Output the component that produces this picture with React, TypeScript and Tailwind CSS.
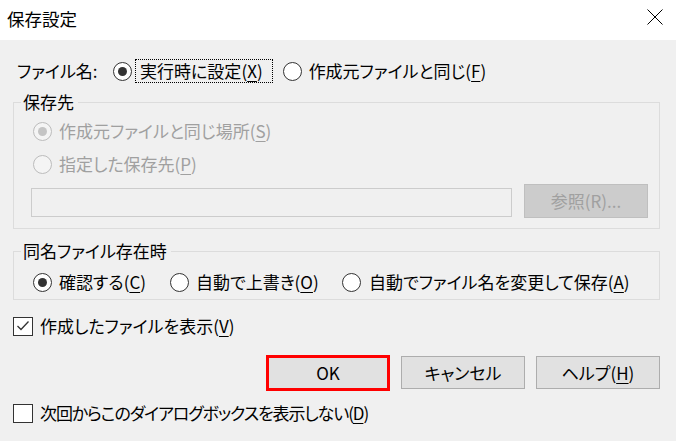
import React from 'react';

const font = "font-['Noto_Sans_CJK_JP','Noto_Sans',sans-serif] [font-feature-settings:'palt']";

function Key({ k }: { k: string }) {
  return (
    <>
      (<span className="underline underline-offset-[3px] decoration-1">{k}</span>)
    </>
  );
}

function Radio({ checked, disabled }: { checked?: boolean; disabled?: boolean }) {
  return (
    <span
      className={`flex h-[19px] w-[19px] shrink-0 items-center justify-center rounded-full border-[1.5px] ${
        disabled ? 'border-[#bcbcbc] bg-[#f4f4f4]' : 'border-[#333] bg-white'
      }`}
    >
      {checked && (
        <span className={`h-[9px] w-[9px] rounded-full ${disabled ? 'bg-[#c4c4c4]' : 'bg-[#333]'}`} />
      )}
    </span>
  );
}

function Checkbox({ checked }: { checked?: boolean }) {
  return (
    <span className="flex h-[19px] w-[20px] shrink-0 items-center justify-center border border-[#333] bg-white">
      {checked && (
        <svg width="14" height="12" viewBox="0 0 14 12">
          <polyline points="1.5,6 5,9.5 12.5,1.5" fill="none" stroke="#333" strokeWidth="1.3" />
        </svg>
      )}
    </span>
  );
}

function Button({ children, primary }: { children: React.ReactNode; primary?: boolean }) {
  return (
    <button
      className={`flex w-[124px] items-center justify-center bg-[#e1e1e1] text-black ${
        primary ? 'h-[36px] border-[3px] border-[#ff0000]' : 'h-[33px] border border-[#adadad]'
      }`}
    >
      {children}
    </button>
  );
}

export default function App() {
  return (
    <div className={`h-[441px] w-[676px] overflow-hidden bg-[#f0f0f0] text-[17px] leading-[22px] text-black ${font}`}>
      {/* title bar */}
      <div className="flex h-[40px] items-center justify-between bg-white pl-[7px] pr-[13px]">
        <span className="-mt-[3px] text-[17.5px]">保存設定</span>
        <svg width="16" height="16" viewBox="0 0 16 16" className="-mt-[6px]">
          <path d="M0.5 0.5 L15.5 15.5 M15.5 0.5 L0.5 15.5" stroke="#000" strokeWidth="1" />
        </svg>
      </div>

      <div className="px-[13px]">
        {/* file name row */}
        <div className="mt-[20px] flex h-[22px] items-center">
          <span className="ml-[4px] w-[96px]">ファイル名:</span>
          <Radio checked />
          <span className="ml-[3px] border border-dotted border-black pl-[4px] pr-[9px]">
            実行時に設定<Key k="X" />
          </span>
          <span className="ml-[10px]">
            <Radio />
          </span>
          <span className="ml-[7px]">
            作成元ファイルと同じ<Key k="F" />
          </span>
        </div>

        {/* 保存先 */}
        <fieldset className="mt-[9px] w-[647px] border border-[#dcdcdc] px-0 pb-[10px]">
          <legend className="ml-[7px] pl-[2px] pr-[4px]">保存先</legend>
          <div className="mt-[7px] flex h-[22px] items-center gap-[7px] pl-[19px] text-[#a0a0a0]">
            <Radio checked disabled />
            <span>
              作成元ファイルと同じ場所<Key k="S" />
            </span>
          </div>
          <div className="mt-[11px] flex h-[22px] items-center gap-[7px] pl-[19px] text-[#a0a0a0]">
            <Radio disabled />
            <span>
              指定した保存先<Key k="P" />
            </span>
          </div>
          <div className="mt-[9px] flex h-[34px] items-center pl-[17px]">
            <div className="mt-[3px] h-[29px] w-[481px] border border-[#cccccc] bg-[#f0f0f0]" />
            <div className="ml-[12px] flex h-[34px] w-[124px] items-center justify-center border border-[#bfbfbf] bg-[#cccccc] text-[#a0a0a0]">
              参照(R)...
            </div>
          </div>
        </fieldset>

        {/* 同名ファイル存在時 */}
        <fieldset className="mt-[11px] w-[647px] border border-[#dcdcdc] px-0 pb-[6px]">
          <legend className="ml-[7px] pl-[2px] pr-[4px]">同名ファイル存在時</legend>
          <div className="mt-[9px] flex h-[22px] items-center pl-[19px]">
            <div className="flex w-[137px] items-center gap-[7px]">
              <Radio checked />
              <span>
                確認する<Key k="C" />
              </span>
            </div>
            <div className="flex w-[172px] items-center gap-[7px]">
              <Radio />
              <span>
                自動で上書き<Key k="O" />
              </span>
            </div>
            <div className="flex items-center gap-[8px]">
              <Radio />
              <span>
                自動でファイル名を変更して保存<Key k="A" />
              </span>
            </div>
          </div>
        </fieldset>

        {/* show file */}
        <div className="mt-[16px] flex h-[20px] items-center gap-[7px]">
          <Checkbox checked />
          <span>
            作成したファイルを表示<Key k="V" />
          </span>
        </div>

        {/* buttons */}
        <div className="mt-[19px] flex items-start justify-end gap-[11px] pr-[3px]">
          <Button primary>OK</Button>
          <div className="mt-[1px]">
            <Button>キャンセル</Button>
          </div>
          <div className="mt-[1px]">
            <Button>
              ヘルプ<Key k="H" />
            </Button>
          </div>
        </div>

        {/* don't show again */}
        <div className="mt-[12px] flex h-[20px] items-center gap-[7px]">
          <Checkbox />
          <span className="tracking-[-1.1px]">
            次回からこのダイアログボックスを表示しない<Key k="D" />
          </span>
        </div>
      </div>
    </div>
  );
}
